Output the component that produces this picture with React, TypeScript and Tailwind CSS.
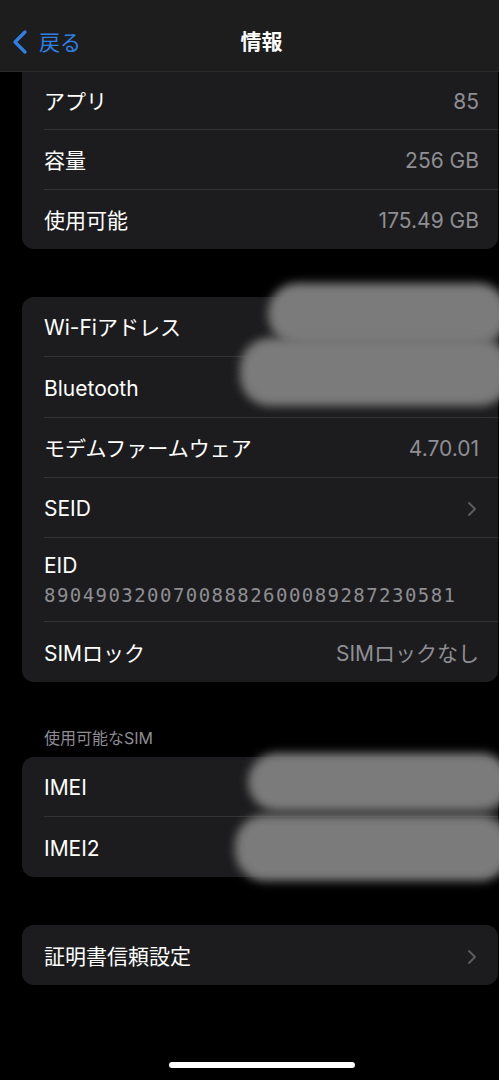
const jp = "font-['Inter','Noto_Sans_CJK_JP',sans-serif]";

function Sep() {
  return <div className="ml-[22px] h-px bg-[#333335]" />;
}

function Chevron() {
  return (
    <svg width="10" height="16" viewBox="0 0 10 16" fill="none" className="mr-[2px]">
      <path d="M2 2l6 6-6 6" stroke="#5b5b5f" strokeWidth="2" strokeLinecap="round" strokeLinejoin="round" />
    </svg>
  );
}

function Row({ label, value, chevron, h = "h-[59px]" }: { label: string; value?: string; chevron?: boolean; h?: string }) {
  return (
    <div className={`${h} flex items-center justify-between pl-[22px] pr-[19px] pt-[3px]`}>
      <span className="text-[21px] text-white">{label}</span>
      {value && <span className="text-[21px] text-[#8e8e93]">{value}</span>}
      {chevron && <Chevron />}
    </div>
  );
}

function Blob({ className }: { className: string }) {
  return <div className={`absolute rounded-[30px] bg-[#7b7b7b] blur-[5px] ${className}`} />;
}

export default function App() {
  return (
    <div className={`min-h-[1080px] w-[499px] bg-black ${jp} relative overflow-hidden`}>
      <header className="h-[72px] bg-[#1d1d1e] border-b border-[#2a2a2c] relative flex items-center justify-center pt-[12px] pl-[24px]">
        <div className="absolute left-[11px] top-[29px] flex items-center gap-[10px]">
          <svg width="18" height="26" viewBox="0 0 18 26" fill="none">
            <path d="M14 3L4 13l10 10" stroke="#2f80e4" strokeWidth="3.2" strokeLinecap="round" strokeLinejoin="round" />
          </svg>
          <span className="text-[21px] text-[#2f80e4] leading-none">戻る</span>
        </div>
        <h1 className="text-[21px] font-bold text-white">情報</h1>
      </header>

      <div className="ml-[22px] mr-px bg-[#1c1c1e] rounded-b-[12px]">
        <Row label="アプリ" value="85" h="h-[57px]" />
        <Sep />
        <Row label="容量" value="256 GB" />
        <Sep />
        <Row label="使用可能" value="175.49 GB" />
      </div>

      <div className="mt-[48px] ml-[22px] mr-px bg-[#1c1c1e] rounded-[12px] relative">
        <Row label="Wi-Fiアドレス" value="" />
        <Sep />
        <Row label="Bluetooth" value="" h="h-[60px]" />
        <Sep />
        <Row label="モデムファームウェア" value="4.70.01" />
        <Sep />
        <Row label="SEID" chevron />
        <Sep />
        <div className="h-[83px] flex flex-col justify-center pl-[22px] pt-[3px]">
          <span className="text-[21px] text-white leading-[28px]">EID</span>
          <span className="text-[19px] tracking-[1.45px] text-[#8e8e93] leading-[30px] font-['DejaVu_Sans_Mono',monospace]">89049032007008882600089287230581</span>
        </div>
        <Sep />
        <Row label="SIMロック" value="SIMロックなし" h="h-[60px]" />
        <Blob className="left-[246px] -top-[14px] w-[240px] h-[62px]" />
        <Blob className="left-[218px] top-[41px] w-[270px] h-[68px]" />
      </div>

      <div className="mt-[46px] ml-[44px] text-[16px] text-[#8d8d92] leading-[20px]">使用可能なSIM</div>

      <div className="mt-[9px] ml-[22px] mr-px bg-[#1c1c1e] rounded-[12px] relative">
        <Row label="IMEI" />
        <Sep />
        <Row label="IMEI2" h="h-[60px]" />
        <Blob className="left-[226px] -top-[4px] w-[262px] h-[58px]" />
        <Blob className="left-[213px] top-[58px] w-[275px] h-[66px]" />
      </div>

      <div className="mt-[48px] ml-[22px] mr-px bg-[#1c1c1e] rounded-[12px]">
        <Row label="証明書信頼設定" chevron h="h-[60px]" />
      </div>

      <div className="absolute left-[169px] top-[1062px] w-[186px] h-[6px] rounded-full bg-white" />
    </div>
  );
}
